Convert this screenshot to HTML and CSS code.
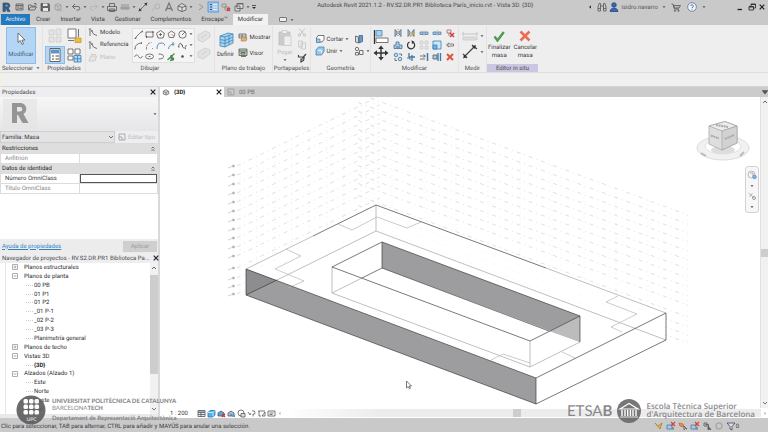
FILE: index.html
```html
<!DOCTYPE html>
<html lang="es">
<head>
<meta charset="utf-8">
<title>Autodesk Revit 2021.1.2</title>
<link rel="stylesheet" href="styles.css">
</head>
<body>
<svg class="sprite" aria-hidden="true">
  <defs>
    <symbol id="i-caret" viewBox="0 0 4 4"><path d="M0.5 1.2h3L2 3z" fill="#555"/></symbol>
    <symbol id="i-left" viewBox="0 0 4 4"><path d="M3 .3v3.400L1 2z" fill="#333"/></symbol>
    <symbol id="i-r" viewBox="0 0 12 12"><path d="M3 2h4.5a2.6 2.6 0 0 1 .8 5L10 10.500H7.500L6 7.500H5.300v3H3zM5.300 3.800v2H7a1 1 0 0 0 0-2z" fill="#1b5fae" fill-rule="evenodd"/></symbol>
    <symbol id="i-home" viewBox="0 0 12 12"><path d="M3 3h7v6H3zM3 4.500h7M5 4.500V9M6.500 6h2.500M6.500 7.500h2.500"/></symbol>
    <symbol id="i-open" viewBox="0 0 12 12"><path d="M2.500 9V4h2.500l1 1h3v1M2.500 9l2-3h6l-2 3zM8 2.500h2v2"/></symbol>
    <symbol id="i-save" viewBox="0 0 12 12"><path d="M2 2.500h7.500l1 1V10H2z" fill="#666"/><path d="M4 2.500h4.500V5H4zM4 7h5v3H4z" fill="#e8e8e8" stroke="none"/></symbol>
    <symbol id="i-sync" viewBox="0 0 12 12"><path d="M3 4l3-1.500L9 4v4L6 9.500 3 8zM3 4l3 1.500L9 4M6 5.500v4M7 8l3 2" stroke="#999"/></symbol>
    <symbol id="i-undo" viewBox="0 0 12 12"><path d="M5 3L2.500 5.500 5 8M2.500 5.500H8a1.800 1.800 0 0 1 0 3.600H6.500"/></symbol>
    <symbol id="i-redo" viewBox="0 0 12 12"><path d="M7 3l2.500 2.500L7 8M9.500 5.500H4a1.800 1.800 0 0 0 0 3.600h1.500" stroke="#b2b2b2"/></symbol>
    <symbol id="i-print" viewBox="0 0 12 12"><path d="M1.500 5.500h9v4h-9zM3.500 5.500v-3h5v3M3.500 8h5v2.500h-5z"/></symbol>
    <symbol id="i-ruler" viewBox="0 0 12 12"><path d="M2 4h8M2 6h8v2H2zM4 6v2M6 6v2M8 6v2" stroke="#888"/></symbol>
    <symbol id="i-dim" viewBox="0 0 12 12"><path d="M2.500 9.500l7-7"/><path d="M1.500 10.500l1-3.500 2.500 2.500zM10.500 1.500l-1 3.500L7 2.500z" fill="#444" stroke="none"/></symbol>
    <symbol id="i-tag" viewBox="0 0 12 12"><path d="M2 10l3-3.500M5 6.500a2.500 2.500 0 1 1 2.500 1.500z" stroke="#aaa"/></symbol>
    <symbol id="i-a" viewBox="0 0 12 12"><path d="M2.500 10L6 2l3.500 8M4 7.500h4" stroke="#777" stroke-width="1.300"/></symbol>
    <symbol id="i-cube" viewBox="0 0 12 12"><path d="M2 5l4-2.500L10 5v4L6 10.500 2 9zM2 5l4 1.500L10 5M6 6.500v4" fill="#ddd"/></symbol>
    <symbol id="i-section" viewBox="0 0 12 12"><path d="M5 3l4 3-4 3" stroke="#888"/></symbol>
    <symbol id="i-lines" viewBox="0 0 12 12"><path d="M1 1h11v10H1z" fill="#9fc6ec" stroke="#4b8fd0"/><path d="M3 3.500h2M3 6h2M3 8.500h2" stroke="#234"/><path d="M6 3.500h4M6 6h4M6 8.500h4" stroke="#fff"/></symbol>
    <symbol id="i-closewin" viewBox="0 0 12 12"><path d="M2 3h4v3H2zM5 6h4v3H5z" stroke="#888"/><path d="M7 7l3 3M10 7l-3 3" stroke="#d33" stroke-width="1.300"/></symbol>
    <symbol id="i-switch" viewBox="0 0 12 12"><path d="M4 2.500h6v5H4zM2 5h5v5H2z" fill="#ddd"/><path d="M4 3h6"/></symbol>
    <symbol id="i-qat" viewBox="0 0 12 12"><path d="M1 4.500h4" stroke="#333"/><path d="M1 6h4L3 8z" fill="#333" stroke="none"/></symbol>
    <symbol id="i-x" viewBox="0 0 8 8"><path d="M1.700 1.700l4.600 4.600M6.300 1.700L1.700 6.300" stroke="#222" stroke-width="1.200"/></symbol>
    <symbol id="i-bino" viewBox="0 0 12 12"><path d="M2 10V6l1-3.500h1.500V10zM7.500 10V2.500H9L10 6v4zM4.500 5h3M2 7.500h2.500M7.500 7.500H10" stroke="#555"/></symbol>
    <symbol id="i-user" viewBox="0 0 12 12"><circle cx="6" cy="4" r="2.300" fill="#3c66ae" stroke="#274a86"/><path d="M2 10.500q0-3 4-3.500 4 .5 4 3.500z" fill="#3c66ae" stroke="#274a86"/></symbol>
    <symbol id="i-cart" viewBox="0 0 12 12"><path d="M1.500 3H3l1.500 5h4.500M3.500 4.500h7L9 7H4.300z" fill="#bbb"/><circle cx="5" cy="9.700" r=".7"/><circle cx="8.500" cy="9.700" r=".7"/></symbol>
    <symbol id="i-help" viewBox="0 0 12 12"><circle cx="6" cy="6" r="4.300" fill="#f6f8fb" stroke="#5b6f92"/><path d="M4.600 5a1.400 1.400 0 1 1 1.400 1.600v.7M6 8.200v.8" stroke="#2f55a0"/></symbol>
    <symbol id="i-min" viewBox="0 0 12 12"><path d="M3.500 8.500h4.500" stroke="#222" stroke-width="1.300"/></symbol>
    <symbol id="i-restore" viewBox="0 0 12 12"><path d="M3 5.500h4.500v3.500H3zM5 5.500V3h4.500v4H7.500M5 3.500h4.500M3 6h4.500" stroke="#222"/></symbol>

    <symbol id="i-cursor" viewBox="0 0 12 16"><path d="M3 2v9.500l2.300-2L7 13.500l1.600-.8-1.700-3.700H10z" fill="#fff" stroke="#555"/></symbol>
    <symbol id="i-typeprops" viewBox="0 0 16 16"><path d="M2 2h5v5H2zM9 1h5v6H9zM2 9h5v5H2zM9 9h5v5H9z" fill="#e4e4e4" stroke="#ccc"/></symbol>
    <symbol id="i-family" viewBox="0 0 16 16"><path d="M2 1h8v9H2zM2 12.500h6M12.500 1v8" fill="#fff" stroke="#555"/><path d="M9 10h6v4.500H9z" fill="#f0be3c" stroke="#c9962a"/></symbol>
    <symbol id="i-props" viewBox="0 0 16 16"><path d="M3 1.500h10v13H3z" fill="#fff" stroke="#444"/><path d="M4 2.500h8v4H4z" fill="#5b93d2" stroke="none"/><path d="M5 9h2M5 12h2M8.500 9H12M8.500 12H12" stroke="#222"/></symbol>
    <symbol id="i-cats" viewBox="0 0 16 16"><path d="M2 2h5v5H2zM9 2h5v5H9zM2 9h5v4H2z" fill="#fff" stroke="#555"/><path d="M8 8.500h7V15H8zM11.500 8.500V15M8 11.800h7" fill="#b5d8f0" stroke="#2f7fbf"/></symbol>
    <symbol id="i-model" viewBox="0 0 10 10"><path d="M2 9V2M.8 2h2.400M4 4.500Q5 8 9 8.500" /><circle cx="4" cy="4" r=".6"/></symbol>
    <symbol id="i-plane" viewBox="0 0 10 10"><path d="M1 8l1.500-5h6L7 8zM3 1.500h5" fill="#e6e6e6" stroke="#c4c4c4"/></symbol>
    <symbol id="i-line" viewBox="0 0 11 11"><path d="M2.500 8.500l6-6M1.500 9.500h1.500v-1.500M8 3h1.500V1.500"/></symbol>
    <symbol id="i-rect" viewBox="0 0 11 11"><path d="M2 3h7v5H2z"/><path d="M2 8h1M8.500 3h1" stroke-width="1.800"/></symbol>
    <symbol id="i-poly" viewBox="0 0 11 11"><path d="M5.500 1.500l4 2.800-1.500 4.700H3L1.500 4.300zM5.500 4v3M4 5.500h3"/></symbol>
    <symbol id="i-polyc" viewBox="0 0 11 11"><path d="M5.500 2l3.500 2.500-1.300 4H3.300L2 4.500z"/><path d="M5.500 5.500L8 7" stroke="#c66"/></symbol>
    <symbol id="i-circle" viewBox="0 0 11 11"><circle cx="5.500" cy="5.500" r="3.700"/><path d="M5.500 5.500L8 3M5 5.500h1"/></symbol>
    <symbol id="i-arc1" viewBox="0 0 11 11"><path d="M2 9Q2 3.500 8.500 3M1.500 9h1M8.500 2v2"/></symbol>
    <symbol id="i-arc2" viewBox="0 0 11 11"><path d="M2.500 9.500Q2 3 7.500 2.500M8 8.500h.8" stroke-dasharray="2 1"/></symbol>
    <symbol id="i-arc3" viewBox="0 0 11 11"><path d="M2 9Q2 3 6 3t3.500 2.500" stroke="#3d6ea5"/></symbol>
    <symbol id="i-arc4" viewBox="0 0 11 11"><path d="M2.500 9Q3 4 8.500 4M7 2v4" stroke="#3d7fa5"/></symbol>
    <symbol id="i-spline" viewBox="0 0 11 11"><path d="M1.500 7Q3 0 5 5.500T9.500 5"/><path d="M1.500 7h.8M5 5.500h.8M8 8.500h.8" stroke-width="1.600"/></symbol>
    <symbol id="i-spline2" viewBox="0 0 11 11"><path d="M1.500 6Q3.500 2 5.500 5.500T9.500 5"/></symbol>
    <symbol id="i-ell" viewBox="0 0 11 11"><ellipse cx="5.500" cy="5.500" rx="4" ry="2.500"/><path d="M4.500 5.500h2"/></symbol>
    <symbol id="i-pell" viewBox="0 0 11 11"><path d="M3.500 3q5 0 5 2.500T3.500 8"/></symbol>
    <symbol id="i-pick" viewBox="0 0 11 11"><path d="M1.500 9l7-6.500M4 9.500l4-1" stroke="#3da03d" stroke-width="1.300"/><path d="M5 4v4l3 0z" fill="#6a8"/></symbol>
    <symbol id="i-point" viewBox="0 0 11 11"><circle cx="5.500" cy="5.500" r="1" fill="#555"/></symbol>
    <symbol id="i-face" viewBox="0 0 16 14"><path d="M2 5l7-4 5 2v4l-7 5-5-2zM5 8l6-4" fill="#e2e2e2" stroke="#ccc"/></symbol>
    <symbol id="i-grid" viewBox="0 0 18 18"><path d="M3 5l8-3 5 1v9l-8 4-5-1z" fill="#a8d2ee" stroke="#3f87bd"/><path d="M3 8.500l5 1 8-3.500M3 11.500l5 1 8-3.500M8 6v10M12 3.800v10M3 5l5 1 8-3" stroke="#3f87bd"/></symbol>
    <symbol id="i-show" viewBox="0 0 10 10"><path d="M1 2h7v4H1zM1 4h7M4 2v4" fill="#fff"/><path d="M4 5l5 1-1 3H3z" fill="#e8b64a" stroke="#a88"/></symbol>
    <symbol id="i-viewer" viewBox="0 0 10 10"><path d="M1 1h8v6.500H1zM1 3h8M3 8.500h5M3 4.500h4v1.500H3z" fill="#b8d8c0"/></symbol>
    <symbol id="i-paste" viewBox="0 0 16 18"><path d="M2 3h11v13H2z" fill="#ccc" stroke="#bbb"/><path d="M5 1.500h5v3H5zM7 7h7v9.500H7z" fill="#eee" stroke="#c8c8c8"/></symbol>
    <symbol id="i-cut" viewBox="0 0 10 10"><path d="M2 1.500l5 6M8 1.500l-5 6" stroke="#bbb"/><circle cx="2.500" cy="8" r="1.200" stroke="#bbb"/><circle cx="7.500" cy="8" r="1.200" stroke="#bbb"/></symbol>
    <symbol id="i-copy" viewBox="0 0 10 10"><path d="M1.500 1h4v6h-4zM4 3h4.500v6H4z" fill="#eee" stroke="#c4c4c4"/></symbol>
    <symbol id="i-brush" viewBox="0 0 10 10"><path d="M9 1L5.500 5M1.500 2v2H7v2H4v3l3-2" stroke="#444" stroke-width="1.200"/></symbol>
    <symbol id="i-cope" viewBox="0 0 10 10"><path d="M3 1.500h6v4L7 8H1.500V4z" fill="#fff"/><path d="M1.500 5h3.500v3.500H1.500z" fill="#9cc8ea" stroke="#4d84b5"/></symbol>
    <symbol id="i-join" viewBox="0 0 10 10"><path d="M3.500 1h5.500v4.500L6.500 9H1V4z" fill="#9cc8ea" stroke="#4a7dad"/><path d="M3 4.500h3.500V7" stroke="#fff"/></symbol>
    <symbol id="i-wall" viewBox="0 0 10 10"><path d="M1.500 2l3 1v6l-3-1z" fill="#ddd"/><path d="M5 1.500h3.500v6L5 9z" fill="#5f9bd0" stroke="#45658c"/></symbol>
    <symbol id="i-demol" viewBox="0 0 10 10"><circle cx="3" cy="3" r="1.700"/><path d="M5.500 4.500H9v4H5.500zM1.500 6.500h3V9h-3z" fill="#eee"/></symbol>
    <symbol id="i-align" viewBox="0 0 16 16"><path d="M1.500 1v14" stroke="#333" stroke-width="1.300"/><path d="M3 1.500h6V7H3z" fill="#a5d2f2" stroke="#4487ba"/><path d="M3 9h12v4.500H3z" fill="#fff" stroke="#555"/></symbol>
    <symbol id="i-move" viewBox="0 0 16 16"><path d="M8 3v10M3 8h10" stroke="#333" stroke-width="1.400"/><path d="M8 .5L10.800 4H5.200zM8 15.500L10.800 12H5.200zM.5 8L4 5.200v5.600zM15.500 8L12 5.200v5.600z" fill="#333" stroke="none"/></symbol>
    <symbol id="i-mirror" viewBox="0 0 10 10"><path d="M2 1.500v7L4 6V4zM8 1.500v7L6 6V4z" fill="#a5cbe8" stroke="#567"/><path d="M5 1v8" stroke="#a66" stroke-dasharray="1 1"/></symbol>
    <symbol id="i-mirror2" viewBox="0 0 10 10"><path d="M2 1.500v7L4 6V4zM8 1.500v7L6 6V4z" fill="#a5cbe8" stroke="#567"/><path d="M4 8.500l4.500-4" stroke="#d9a13b" stroke-width="1.500"/></symbol>
    <symbol id="i-split" viewBox="0 0 10 10"><path d="M1 4h3v2.500H1zM6 4h3v2.500H6z" fill="#a5cbe8" stroke="#4a82b2"/><path d="M5 2.500v5" stroke="#888"/></symbol>
    <symbol id="i-unpin" viewBox="0 0 10 10"><path d="M2 2h4v3H2zM4 5v3" stroke="#a66"/><path d="M5 5l4 4M9 5L5 9" stroke="#c33" stroke-width="1.300"/></symbol>
    <symbol id="i-offset" viewBox="0 0 10 10"><path d="M1 8.500V5h2V2h3v3h3v3.500z" fill="#a5cbe8" stroke="#3f74a5"/><path d="M3 7h4"/></symbol>
    <symbol id="i-rotate" viewBox="0 0 10 10"><path d="M3.500 2a3.600 3.600 0 1 0 3.500.2" stroke="#333" stroke-width="1.200"/><path d="M5.500 .2L8.500 2 6 4z" fill="#333" stroke="none"/></symbol>
    <symbol id="i-array" viewBox="0 0 10 10"><path d="M1 1h3v3H1zM6 1h3v3H6zM1 6h3v3H1zM6 6h3v3H6z" fill="#e5e5e5" stroke="#ccc"/></symbol>
    <symbol id="i-scale" viewBox="0 0 10 10"><path d="M1 1h8v8H1z" fill="#cde6f8" stroke="#3a7fba"/><path d="M1 5h4v4H1z" fill="#76b2df" stroke="#3a7fba"/></symbol>
    <symbol id="i-pin" viewBox="0 0 10 10"><path d="M1 5h2M3 3v4l2-1h3.500V4H5z" fill="#eee" stroke="#666"/></symbol>
    <symbol id="i-copy2" viewBox="0 0 10 10"><circle cx="3" cy="3" r="1.800" fill="#b9dbf2" stroke="#3d78ad"/><circle cx="7" cy="7" r="1.800" fill="#b9dbf2" stroke="#3d78ad"/><path d="M6 2h2.500v2M2 6v2.500h2"/></symbol>
    <symbol id="i-trim" viewBox="0 0 10 10"><path d="M3 1v4h6M6 9V3" stroke="#3d78ad" stroke-width="1.300"/><path d="M1 6h3v2"/></symbol>
    <symbol id="i-ext" viewBox="0 0 10 10"><path d="M8.500 1v8" stroke="#3d78ad" stroke-width="1.500"/><path d="M1 4h5M1 7h5M4.500 2.500L6.500 4 4.500 5.500"/></symbol>
    <symbol id="i-ext2" viewBox="0 0 10 10"><path d="M8.500 1v8M6 1v8" stroke="#3d78ad" stroke-width="1.300"/><path d="M1 3h4v4H1z" fill="#a5cbe8"/></symbol>
    <symbol id="i-del" viewBox="0 0 10 10"><path d="M2 2l6 6M8 2L2 8" stroke="#e0533f" stroke-width="2"/></symbol>
    <symbol id="i-meas1" viewBox="0 0 16 10"><path d="M1 3h14M1 1v4M15 1v4M1 7h14" stroke="#bbb"/><path d="M1 6h14v3H1z" fill="#ddd" stroke="#ccc"/></symbol>
    <symbol id="i-meas2" viewBox="0 0 16 16"><path d="M2 13L13 2M1 10l4 4M10 1l5 4" stroke="#444" stroke-width="1.200"/><path d="M1 14.500l1.500-4 2.500 2.500zM14 1l-1 4-3-2.500z" fill="#333" stroke="none"/></symbol>
    <symbol id="i-ok" viewBox="0 0 12 12"><path d="M1.500 6.500L4.500 10.500 10.800 2" stroke="#4d9a52" stroke-width="2.400"/></symbol>
    <symbol id="i-no" viewBox="0 0 12 12"><path d="M1.500 1.500l9 9M10.500 1.500l-9 9" stroke="#ec6e52" stroke-width="2.600"/></symbol>
    <symbol id="i-chev" viewBox="0 0 6 6"><path d="M1 2l2 2 2-2" stroke="#555"/></symbol>
    <symbol id="i-chevup" viewBox="0 0 6 6"><path d="M1 4l2-2 2 2" stroke="#444"/></symbol>
    <symbol id="i-plan" viewBox="0 0 8 8"><path d="M1 1h6v6H1zM1 4h3v3" stroke="#999"/></symbol>
    <symbol id="i-fold" viewBox="0 0 6 6"><path d="M1.500 2.500L3 1l1.500 1.500M1.500 5L3 3.500 4.500 5"/></symbol>
    <symbol id="i-plus" viewBox="0 0 6 6"><path d="M.5 .5h5v5h-5zM1.500 3h3M3 1.500v3" stroke="#999"/></symbol>
    <symbol id="i-minus" viewBox="0 0 6 6"><path d="M.5 .5h5v5h-5zM1.500 3h3" stroke="#999"/></symbol>

    <symbol id="v-detail" viewBox="0 0 9 9"><path d="M1 1.500h7v6H1zM1 3.500h7M1 5.500h7M4 3.500v4" fill="#eee"/><path d="M1 2.200h7" stroke="#579"/></symbol>
    <symbol id="v-style" viewBox="0 0 9 9"><path d="M1 3.500l2-2h5v4.500l-2 2H1z" fill="#5ab0e6" stroke="#2876b2"/><path d="M1 3.500h5v4M6 3.500l2-2" stroke="#d8f0ff"/></symbol>
    <symbol id="v-sun" viewBox="0 0 9 9"><path d="M1 7V4l3-2 3 2v3z" fill="#6aa5d5" stroke="#357"/><path d="M5 5l3 3M8 5L5 8" stroke="#d33" stroke-width="1.200"/></symbol>
    <symbol id="v-shadow" viewBox="0 0 9 9"><path d="M1 7V4l3-2 3 2v3zM4 4.500V7" fill="#a9c6de" stroke="#456"/><path d="M5.500 5.500l2.500 2.500M8 5.500L5.500 8" stroke="#58b" stroke-width="1"/></symbol>
    <symbol id="v-lock" viewBox="0 0 9 9"><circle cx="4" cy="4" r="3"/><path d="M4 4.500h4V8H4z" fill="#ddd"/></symbol>
    <symbol id="v-glass" viewBox="0 0 9 9"><path d="M1 3l2 3 1-2M5 2q3-1 3 1.500T6 5v2.500"/></symbol>
    <symbol id="v-prop" viewBox="0 0 9 9"><path d="M1 2h7M2 2v5h2M5 7l3-4v4z"/></symbol>
    <symbol id="v-view" viewBox="0 0 9 9"><path d="M1 2h7v5H1zM2.500 5.500h3M2.500 4h4"/></symbol>
    <symbol id="s-1" viewBox="0 0 10 10"><path d="M1 2l3 3 4-3-2 6z" fill="#ecb542" stroke="#a88030"/></symbol>
    <symbol id="s-2" viewBox="0 0 10 10"><path d="M1 4h5v4H1z" fill="#a4cbe8" stroke="#357fb8"/><path d="M5 1l4 4M9 1L5 5" stroke="#d34434" stroke-width="1.200"/><path d="M7 6v3"/></symbol>
    <symbol id="s-3" viewBox="0 0 10 10"><path d="M1 2l4 1 1 3-4-1z" fill="#ef8c58" stroke="#d2602e"/><path d="M6 5v4l1.500-1.500L9 8z"/></symbol>
    <symbol id="s-4" viewBox="0 0 10 10"><path d="M2 2h3v3H2zM3.500 3.500h3v2"/><path d="M6 5v4l1-1 2 .5z" fill="#666"/></symbol>
    <symbol id="s-5" viewBox="0 0 10 10"><circle cx="5" cy="5" r="3" stroke="#aaa" stroke-width="1.500"/></symbol>
    <symbol id="s-6" viewBox="0 0 10 10"><path d="M1 2h8L6 5.500V9L4 8V5.500z" fill="#dde" stroke="#445"/></symbol>
  </defs>
</svg>

<header class="titlebar">
  <div class="quick">
    <svg class="q"><use href="#i-r"/></svg>
    <button aria-label="Inicio"><svg class="q"><use href="#i-home"/></svg></button>
    <button aria-label="Abrir"><svg class="q"><use href="#i-open"/></svg></button>
    <button aria-label="Guardar"><svg class="q"><use href="#i-save"/></svg></button>
    <button aria-label="Sincronizar"><svg class="q"><use href="#i-sync"/></svg></button>
    <svg class="c"><use href="#i-caret"/></svg>
    <button aria-label="Deshacer"><svg class="q"><use href="#i-undo"/></svg></button>
    <svg class="c"><use href="#i-caret"/></svg>
    <button aria-label="Rehacer"><svg class="q"><use href="#i-redo"/></svg></button>
    <svg class="c"><use href="#i-caret"/></svg>
    <button aria-label="Imprimir"><svg class="q"><use href="#i-print"/></svg></button>
    <button aria-label="Medir"><svg class="q"><use href="#i-ruler"/></svg></button>
    <svg class="c"><use href="#i-caret"/></svg>
    <button aria-label="Cota alineada"><svg class="q"><use href="#i-dim"/></svg></button>
    <button aria-label="Etiqueta"><svg class="q"><use href="#i-tag"/></svg></button>
    <button aria-label="Texto"><svg class="q"><use href="#i-a"/></svg></button>
    <button aria-label="Vista 3D"><svg class="q"><use href="#i-cube"/></svg></button>
    <svg class="c"><use href="#i-caret"/></svg>
    <button aria-label="Sección"><svg class="q"><use href="#i-section"/></svg></button>
    <button aria-label="Líneas finas"><svg class="q"><use href="#i-lines"/></svg></button>
    <button aria-label="Cerrar ocultas"><svg class="q"><use href="#i-closewin"/></svg></button>
    <button aria-label="Cambiar ventanas"><svg class="q"><use href="#i-switch"/></svg></button>
    <svg class="c"><use href="#i-caret"/></svg>
    <button aria-label="Personalizar"><svg class="q"><use href="#i-qat"/></svg></button>
  </div>
  <h1>Autodesk Revit 2021.1.2 - RV.S2.DR.PR1 Biblioteca París_inicio.rvt - Vista 3D: {3D}</h1>
  <div class="account">
    <svg class="c"><use href="#i-left"/></svg>
    <button aria-label="Buscar"><svg class="q"><use href="#i-bino"/></svg></button>
    <button class="user"><svg class="q"><use href="#i-user"/></svg>isidro.navarro</button>
    <svg class="c"><use href="#i-caret"/></svg>
    <button aria-label="Tienda"><svg class="q"><use href="#i-cart"/></svg></button>
    <button aria-label="Ayuda"><svg class="q"><use href="#i-help"/></svg></button>
    <svg class="c"><use href="#i-caret"/></svg>
  </div>
  <div class="window">
    <button aria-label="Minimizar"><svg class="q"><use href="#i-min"/></svg></button>
    <button aria-label="Restaurar"><svg class="q"><use href="#i-restore"/></svg></button>
    <button aria-label="Cerrar"><svg class="w8"><use href="#i-x"/></svg></button>
  </div>
</header>

<nav class="tabs">
  <button class="file">Archivo</button>
  <button>Crear</button>
  <button>Insertar</button>
  <button>Vista</button>
  <button>Gestionar</button>
  <button>Complementos</button>
  <button>Enscape™</button>
  <button class="active">Modificar</button>
  <button class="collapse" aria-label="Minimizar cinta"><i></i><svg class="c"><use href="#i-caret"/></svg></button>
</nav>

<div class="ribbon">
  <section class="panel p-sel">
    <div class="tools"><button class="modify on"><svg class="cur"><use href="#i-cursor"/></svg>Modificar</button></div>
    <h2>Seleccionar <svg class="c"><use href="#i-caret"/></svg></h2>
  </section>
  <section class="panel p-prop">
    <div class="tools quad">
      <button aria-label="Propiedades de tipo"><svg class="m"><use href="#i-typeprops"/></svg></button>
      <button aria-label="Familia"><svg class="m"><use href="#i-family"/></svg></button>
      <button class="on" aria-label="Propiedades"><svg class="m"><use href="#i-props"/></svg></button>
      <button aria-label="Categorías"><svg class="m"><use href="#i-cats"/></svg></button>
    </div>
    <h2>Propiedades</h2>
  </section>
  <section class="panel p-draw">
    <div class="tools">
      <div class="stack">
        <button><svg class="s"><use href="#i-model"/></svg>Modelo</button>
        <button><svg class="s"><use href="#i-model"/></svg>Referencia</button>
        <button disabled><svg class="s"><use href="#i-plane"/></svg>Plano</button>
      </div>
      <div class="gallery">
        <button aria-label="Línea"><svg class="g"><use href="#i-line"/></svg></button>
        <button aria-label="Rectángulo"><svg class="g"><use href="#i-rect"/></svg></button>
        <button aria-label="Polígono inscrito"><svg class="g"><use href="#i-poly"/></svg></button>
        <button aria-label="Polígono circunscrito"><svg class="g"><use href="#i-polyc"/></svg></button>
        <button aria-label="Círculo"><svg class="g"><use href="#i-circle"/></svg></button>
        <button aria-label="Subir"><svg class="c"><use href="#i-caret"/></svg></button>
        <button aria-label="Arco por tres puntos"><svg class="g"><use href="#i-arc1"/></svg></button>
        <button aria-label="Arco por centro"><svg class="g"><use href="#i-arc2"/></svg></button>
        <button aria-label="Arco tangente"><svg class="g"><use href="#i-arc3"/></svg></button>
        <button aria-label="Arco de empalme"><svg class="g"><use href="#i-arc4"/></svg></button>
        <button aria-label="Spline"><svg class="g"><use href="#i-spline"/></svg></button>
        <button aria-label="Bajar"><svg class="c"><use href="#i-caret"/></svg></button>
        <button aria-label="Spline por puntos"><svg class="g"><use href="#i-spline2"/></svg></button>
        <button aria-label="Elipse"><svg class="g"><use href="#i-ell"/></svg></button>
        <button aria-label="Elipse parcial"><svg class="g"><use href="#i-pell"/></svg></button>
        <button aria-label="Seleccionar líneas"><svg class="g"><use href="#i-pick"/></svg></button>
        <button aria-label="Punto"><svg class="g"><use href="#i-point"/></svg></button>
        <button aria-label="Más"><svg class="c"><use href="#i-caret"/></svg></button>
      </div>
      <div class="stack faces">
        <button disabled aria-label="Dibujar en cara"><svg class="f"><use href="#i-face"/></svg></button>
        <button disabled aria-label="Dibujar en plano"><svg class="f"><use href="#i-face"/></svg></button>
      </div>
    </div>
    <h2>Dibujar</h2>
  </section>
  <section class="panel p-plane">
    <div class="tools">
      <button class="big"><svg class="b"><use href="#i-grid"/></svg>Definir</button>
      <div class="stack two">
        <button><svg class="s"><use href="#i-show"/></svg>Mostrar</button>
        <button><svg class="s"><use href="#i-viewer"/></svg>Visor</button>
      </div>
    </div>
    <h2>Plano de trabajo</h2>
  </section>
  <section class="panel p-clip">
    <div class="tools">
      <button class="big" disabled><svg class="b"><use href="#i-paste"/></svg>Pegar<svg class="c"><use href="#i-caret"/></svg></button>
      <div class="stack">
        <button disabled aria-label="Cortar"><svg class="s"><use href="#i-cut"/></svg></button>
        <button disabled aria-label="Copiar"><svg class="s"><use href="#i-copy"/></svg></button>
        <button aria-label="Igualar tipo"><svg class="s"><use href="#i-brush"/></svg></button>
      </div>
    </div>
    <h2>Portapapeles</h2>
  </section>
  <section class="panel p-geo">
    <div class="tools geo">
      <button><svg class="s"><use href="#i-cope"/></svg>Cortar <svg class="c"><use href="#i-caret"/></svg></button>
      <button aria-label="Muro"><svg class="s"><use href="#i-wall"/></svg></button>
      <button><svg class="s"><use href="#i-join"/></svg>Unir <svg class="c"><use href="#i-caret"/></svg></button>
      <button aria-label="Derribar"><svg class="s"><use href="#i-demol"/></svg><svg class="c"><use href="#i-caret"/></svg></button>
    </div>
    <h2>Geometría</h2>
  </section>
  <section class="panel p-mod">
    <div class="tools">
      <div class="stack two">
        <button aria-label="Alinear"><svg class="m"><use href="#i-align"/></svg></button>
        <button aria-label="Mover"><svg class="m"><use href="#i-move"/></svg></button>
      </div>
      <div class="edit">
        <button aria-label="Simetría por eje"><svg class="s"><use href="#i-mirror"/></svg></button>
        <button aria-label="Simetría dibujada"><svg class="s"><use href="#i-mirror2"/></svg></button>
        <button aria-label="Dividir"><svg class="s"><use href="#i-split"/></svg></button>
        <button aria-label="Dividir con hueco"><svg class="s"><use href="#i-split"/></svg></button>
        <button aria-label="Desbloquear"><svg class="s"><use href="#i-unpin"/></svg></button>
        <button aria-label="Desfase"><svg class="s"><use href="#i-offset"/></svg></button>
        <button aria-label="Rotar"><svg class="s"><use href="#i-rotate"/></svg></button>
        <button aria-label="Matriz"><svg class="s"><use href="#i-array"/></svg></button>
        <button aria-label="Escala"><svg class="s"><use href="#i-scale"/></svg></button>
        <button aria-label="Bloquear"><svg class="s"><use href="#i-pin"/></svg></button>
        <button aria-label="Copiar elemento"><svg class="s"><use href="#i-copy2"/></svg></button>
        <button aria-label="Recortar"><svg class="s"><use href="#i-trim"/></svg></button>
        <button aria-label="Extender uno"><svg class="s"><use href="#i-ext"/></svg></button>
        <button aria-label="Extender varios"><svg class="s"><use href="#i-ext2"/></svg></button>
        <button aria-label="Suprimir"><svg class="s"><use href="#i-del"/></svg></button>
      </div>
    </div>
    <h2>Modificar</h2>
  </section>
  <section class="panel p-meas">
    <div class="tools stack two">
      <button aria-label="Medir entre referencias"><svg class="l"><use href="#i-meas1"/></svg><svg class="c"><use href="#i-caret"/></svg></button>
      <button aria-label="Acotar"><svg class="m"><use href="#i-meas2"/></svg><svg class="c"><use href="#i-caret"/></svg></button>
    </div>
    <h2>Medir</h2>
  </section>
  <section class="panel p-inplace">
    <div class="tools">
      <button class="big"><svg class="k"><use href="#i-ok"/></svg><span>Finalizar<br>masa</span></button>
      <button class="big"><svg class="k"><use href="#i-no"/></svg><span>Cancelar<br>masa</span></button>
    </div>
    <h2>Editor in situ</h2>
  </section>
</div>
<div class="options"></div>

<main>
  <aside>
    <section class="props">
      <header class="dock"><h2>Propiedades</h2><button aria-label="Cerrar propiedades"><svg class="w8"><use href="#i-x"/></svg></button></header>
      <div class="type">
        <svg class="bigr" viewBox="0 0 34 30"><path d="M0 0h34v30H0z" fill="#e4e4e4" opacity=".7"/><path d="M9 4h9a6 6 0 0 1 2.500 11l5 9h-6l-4.500-8h-1v8H9zM14 8v4.500h3a2.200 2.200 0 0 0 0-4.500z" fill="#959597" fill-rule="evenodd"/></svg>
        <svg class="c"><use href="#i-caret"/></svg>
      </div>
      <div class="family">
        <label class="combo"><select aria-label="Familia"><option>Familia: Masa</option></select><svg class="w6"><use href="#i-chev"/></svg></label>
        <button disabled><svg class="w8"><use href="#i-plan"/></svg>Editar tipo</button>
      </div>
      <table>
        <tbody>
          <tr class="group"><th colspan="2">Restricciones<svg class="w6"><use href="#i-fold"/></svg></th></tr>
          <tr class="dim"><td>Anfitrión</td><td></td></tr>
          <tr class="group"><th colspan="2">Datos de identidad<svg class="w6"><use href="#i-fold"/></svg></th></tr>
          <tr><td><label for="omni">Número OmniClass</label></td><td><input id="omni" type="text"></td></tr>
          <tr class="dim"><td>Título OmniClass</td><td></td></tr>
        </tbody>
      </table>
      <footer><a href="#">Ayuda de propiedades</a><button disabled>Aplicar</button></footer>
    </section>
    <section class="browser">
      <header class="dock"><h2>Navegador de proyectos - RV.S2.DR.PR1 Biblioteca Pa...</h2><button aria-label="Cerrar navegador"><svg class="w8"><use href="#i-x"/></svg></button></header>
      <div class="treebox">
        <ul class="tree">
          <li><svg class="w6"><use href="#i-plus"/></svg>Planos estructurales</li>
          <li><svg class="w6"><use href="#i-minus"/></svg>Planos de planta</li>
          <li class="leaf">00 PB</li>
          <li class="leaf">01 P1</li>
          <li class="leaf">01 P2</li>
          <li class="leaf">_01 P-1</li>
          <li class="leaf">_02 P-2</li>
          <li class="leaf">_03 P-3</li>
          <li class="leaf">Planimetría general</li>
          <li><svg class="w6"><use href="#i-plus"/></svg>Planos de techo</li>
          <li><svg class="w6"><use href="#i-minus"/></svg>Vistas 3D</li>
          <li class="leaf current">{3D}</li>
          <li><svg class="w6"><use href="#i-minus"/></svg>Alzados (Alzado 1)</li>
          <li class="leaf">Este</li>
          <li class="leaf">Norte</li>
          <li class="leaf">Oeste</li>
          <li class="leaf">Sur</li>
        </ul>
        <div class="vbar"><svg class="w6"><use href="#i-chevup"/></svg><i></i><svg class="w6"><use href="#i-chev"/></svg></div>
      </div>
      <div class="hbar"></div>
    </section>
  </aside>

  <section class="view">
    <div class="doctabs">
      <button class="active"><svg class="w8b"><use href="#i-cube"/></svg><b>{3D}</b><svg class="w8 x"><use href="#i-x"/></svg></button>
      <button><svg class="w8"><use href="#i-plan"/></svg>00 PB</button>
      <svg class="w6 more"><use href="#i-caret"/></svg>
    </div>
    <div class="stage">
      <svg class="canvas" viewBox="160 97 600 311" role="img" aria-label="Masa en vista 3D">
        <defs>
          <g id="level">
            <path d="M237 166L380 96M358 93.500L688 215" stroke="#d2d2d2" stroke-width=".7" stroke-dasharray="4 4 1 4"/>
            <path d="M228 168l5-2" stroke="#ccc"/>
            <circle cx="233.500" cy="166" r="1.100" fill="#b8b8b8" stroke="#adadad" stroke-width=".6"/>
          </g>
        </defs>
        <g stroke="#ebebeb" stroke-dasharray="1 4">
          <path d="M240 164v130M257 156v110M275 147v108M292 139v108M309 131v108M327 122v108M344 114v108M361 106v105M374 98v108M392 105v108M424 117v108M456 129v108M488 141v108M520 153v108M552 165v108M584 177v108M616 188v108M648 200v110M687 215v128"/>
        </g>
        <use href="#level"/><use href="#level" y="9"/><use href="#level" y="18"/><use href="#level" y="27"/>
        <use href="#level" y="36"/><use href="#level" y="45"/><use href="#level" y="54"/><use href="#level" y="63"/>
        <use href="#level" y="72"/><use href="#level" y="81"/><use href="#level" y="90"/><use href="#level" y="102"/>
        <use href="#level" y="112"/><use href="#level" y="120"/><use href="#level" y="128"/>
        <path d="M246 269L376 205 666 313V340L536 404 246 295z" fill="#fff" opacity=".8" stroke="none"/>
        <path d="M246 269L536 378V404L246 295z" fill="#9d9d9f" stroke="none"/>
        <path d="M246 269L277 280.500 246 295z" fill="#8d8d90" stroke="none"/>
        <path d="M382 242L580 316V342L382 268z" fill="#9d9d9f" stroke="none"/>
        <path d="M580 316V342L549 331z" fill="#bcbcbd" stroke="none"/>
        <g stroke="#a4a4a4" stroke-width=".7">
          <path d="M376 205v26M277 280L376 231 666 340M332 293L530 367 580 342M332 267v26M530 341v26M332 293L362 278"/>
          <path d="M338 224L352 230 377 217 407 228 421 222M286 249L301 256 275 269 304 281 288 288M618 296L606 302 637 314 611 327 622 332M491 360L503 354 530 363M562 352L575 358" stroke="#b4b4b4"/>
          <path d="M246 269L313 236M546 268L666 313"/>
        </g>
        <g stroke="#3f3f3f" stroke-width=".7">
          <path d="M313 236L376 205 546 268M246 269L536 378 666 313V340L536 404 246 295V269M536 378V404M246 295L277 280"/>
          <path d="M382 242L332 267 530 341 580 316 382 242V268L549 331M382 268L362 278M580 316v26"/>
        </g>
        <path d="M406.500 381v7l1.700-1.500 1.200 2.300 1-.5-1.100-2.300H411.500z" fill="#fff" stroke="#444" stroke-width=".7"/>
      </svg>
      <svg class="viewcube" viewBox="0 0 54 42" role="img" aria-label="Cubo de vistas">
        <ellipse cx="27" cy="28" rx="26" ry="12" fill="#f1f1f1" stroke="#d4d4d4"/>
        <ellipse cx="27" cy="26.500" rx="18" ry="7.500" fill="#fff" stroke="#d9d9d9"/>
        <ellipse cx="27" cy="30" rx="12" ry="4" fill="#ddd" stroke="none"/>
        <path d="M5 33l5 3M44 36l4-4" stroke="#bbb" stroke-width="2"/>
        <path d="M13 6L29 1.500 41 6V23L26 30 13 24z" fill="#dedede" stroke="#aaa"/>
        <path d="M13 6L29 1.500 41 6 26 11z" fill="#ececec" stroke="#aaa"/>
        <path d="M26 11L41 6V23L26 30z" fill="#d2d2d2" stroke="#aaa"/>
        <path d="M20 5l12 2M15 15.500l8 3M29 19l9-4" stroke="#aaa" stroke-width="2" stroke-dasharray="2 .6"/>
      </svg>
      <div class="navbar">
        <button aria-label="Rueda de navegación"><svg class="n" viewBox="0 0 10 10"><circle cx="4.500" cy="4.500" r="3.500" stroke="#aaa"/><path d="M3 3h3v3" stroke="#999"/><circle cx="7.500" cy="7" r="1.800" fill="#86b3df" stroke="#5c8fc4"/></svg></button>
        <svg class="c"><use href="#i-caret"/></svg>
        <button aria-label="Zoom"><svg class="n" viewBox="0 0 10 10"><path d="M1.500 2l6 5M5.500 2l-3 4" stroke="#aaa"/><circle cx="7" cy="7" r="1.500" stroke="#888"/></svg></button>
        <svg class="c"><use href="#i-caret"/></svg>
      </div>
      <div class="vbar stagebar"><svg class="w6"><use href="#i-chevup"/></svg><i></i><svg class="w6"><use href="#i-chev"/></svg></div>
    </div>
    <div class="viewbar">
      <button class="scale">1 : 200</button>
      <button aria-label="Nivel de detalle"><svg class="v"><use href="#v-detail"/></svg></button>
      <button aria-label="Estilo visual"><svg class="v"><use href="#v-style"/></svg></button>
      <button aria-label="Camino de sol"><svg class="v"><use href="#v-sun"/></svg></button>
      <button aria-label="Sombras"><svg class="v"><use href="#v-shadow"/></svg></button>
      <button aria-label="Bloquear vista"><svg class="v"><use href="#v-lock"/></svg></button>
      <button aria-label="Ocultar temporalmente"><svg class="v"><use href="#v-glass"/></svg></button>
      <button aria-label="Mostrar ocultos"><svg class="v"><use href="#v-prop"/></svg></button>
      <button aria-label="Propiedades de vista"><svg class="v"><use href="#v-view"/></svg></button>
      <span>‹</span>
      <div class="hscroll"><i></i></div>
      <span>›</span>
    </div>
  </section>
</main>

<footer class="status">
  <p>Clic para seleccionar, TAB para alternar, CTRL para añadir y MAYÚS para anular una selección.</p>
  <div class="filters">
    <button aria-label="Vínculos"><svg class="s"><use href="#s-1"/></svg></button>
    <button aria-label="Subyacentes"><svg class="s"><use href="#s-2"/></svg></button>
    <button aria-label="Bloqueados"><svg class="s"><use href="#s-3"/></svg></button>
    <button aria-label="Por cara"><svg class="s"><use href="#s-2"/></svg></button>
    <button aria-label="Arrastrar"><svg class="s"><use href="#s-4"/></svg></button>
    <button aria-label="Procesos"><svg class="s"><use href="#s-5"/></svg></button>
    <button class="count"><svg class="s"><use href="#s-6"/></svg>0</button>
  </div>
</footer>

<div class="brand upc">
  <svg class="seal" viewBox="0 0 30 30"><circle cx="15" cy="15" r="14.500" fill="#5c5c5e"/><g fill="#fff"><rect x="7.500" y="4" width="4.500" height="4.500" rx="1.500"/><rect x="13" y="4" width="4.500" height="4.500" rx="1.500"/><rect x="18.500" y="4" width="4.500" height="4.500" rx="1.500"/><rect x="7.500" y="9.500" width="4.500" height="4.500" rx="1.500"/><rect x="13" y="9.500" width="4.500" height="4.500" rx="1.500"/><rect x="18.500" y="9.500" width="4.500" height="4.500" rx="1.500"/><rect x="7.500" y="15" width="4.500" height="4.500" rx="1.500"/><rect x="13" y="15" width="4.500" height="4.500" rx="1.500"/><rect x="18.500" y="15" width="4.500" height="4.500" rx="1.500"/></g><text x="15.500" y="25.500" text-anchor="middle" fill="#ddd">UPC</text></svg>
  <div><p>UNIVERSITAT POLITÈCNICA DE CATALUNYA</p><p><span>BARCELONA</span>TECH</p><p class="dept">Departament de Representació Arquitectònica</p></div>
</div>
<div class="brand etsab">
  <strong>ETSA<b>B</b></strong>
  <svg class="temple" viewBox="0 0 24 24"><circle cx="12" cy="12" r="12" fill="#69696b"/><path d="M3 10L12 4.500 21 10z" fill="none" stroke="#fff" stroke-width="1.200"/><path d="M5 11v6M8 11v6M10.700 11v6M13.400 11v6M16 11v6M19 11v6" stroke="#fff" stroke-width="1.400"/><path d="M3 18h18" stroke="#fff"/></svg>
  <p>Escola Tècnica Superior<br>d'Arquitectura de Barcelona</p>
</div>
</body>
</html>
```
FILE: styles.css
```css
* { box-sizing: border-box; margin: 0; padding: 0; }
html, body { height: 100%; }
body {
  position: relative;
  display: flex;
  flex-direction: column;
  overflow: hidden;
  font: 6px/9px Roboto, "Open Sans", sans-serif;
  text-rendering: geometricPrecision;
  color: #39393b;
  background: #eeeeef;
}
button, select, input { font: inherit; color: inherit; background: none; border: 0; text-rendering: inherit; }
button { display: flex; align-items: center; justify-content: center; white-space: nowrap; }
button:disabled { color: #bcbcbe; }
h1, h2 { font: inherit; white-space: nowrap; }
i { display: block; }
svg { display: block; flex: none; fill: none; stroke: #555; stroke-width: 0.8; }
.sprite { position: absolute; width: 0; height: 0; }
.q, .k { width: 12px; height: 12px; }
.c { width: 4px; height: 4px; stroke: none; }
.m { width: 16px; height: 16px; }
.l { width: 16px; height: 10px; }
.s, .n { width: 10px; height: 10px; }
.g { width: 11px; height: 11px; }
.v { width: 9px; height: 9px; }
.b { width: 18px; height: 18px; }
.f { width: 16px; height: 14px; }
.w6 { width: 6px; height: 6px; }
.w8, .w8b { width: 8px; height: 8px; }
.w8b { stroke-width: 1; }

/* Title bar */
.titlebar { display: flex; align-items: center; height: 14px; background: #c9c9ca; }
.quick { display: flex; align-items: center; gap: 1px; }
.titlebar h1 { flex: 1; text-align: center; color: #4a4a4c; margin-bottom: 3px; }
.account { display: flex; align-items: center; gap: 4px; margin-right: 28px; }
.account button + .user { margin-left: -4px; }
.account .user { color: #555557; gap: 2px; }
.window { display: flex; align-items: center; padding-right: 2px; }

/* Ribbon tabs */
.tabs { display: flex; height: 11px; padding-left: 1px; background: #c9c9ca; }
.tabs button { padding: 0 5px; }
.tabs .file { width: 29px; background: #2279bd; color: #e8f3fc; margin-right: 1px; }
.tabs .active { width: 35px; background: #f2f2f3; }
.tabs .collapse { gap: 3px; margin-left: 6px; }
.collapse i { width: 8px; height: 5px; border: 1px solid #777; border-radius: 1px; background: #eee; }

/* Ribbon */
.ribbon { display: flex; height: 48px; padding-top: 1px; background: #eeeeef; border-bottom: 1px solid #dedee0; }
.panel { display: flex; flex-direction: column; border-right: 1px solid #e3e3e5; }
.panel h2 { display: flex; align-items: center; justify-content: center; gap: 3px; height: 8px; color: #4f4f51; }
.tools { flex: 1; display: flex; align-items: center; justify-content: center; }
.stack { display: flex; flex-direction: column; align-items: flex-start; justify-content: space-around; height: 38px; }
.stack button { gap: 2px; }
.on { background: #b4d5f3; outline: 1px solid #8fbbe4; }
.modify { flex-direction: column; gap: 3px; width: 28px; height: 35px; color: #3b5f84; }
.cur { width: 12px; height: 16px; }
.big { flex-direction: column; gap: 2px; line-height: 8px; text-align: center; }
.big .c { margin-top: -1px; }
.two { padding: 3px 0; }
.p-sel { width: 43px; }
.p-prop { width: 43px; }
.quad { display: grid; grid-template-columns: 18px 18px; grid-template-rows: 18px 18px; align-content: center; gap: 1px; }
.p-draw { width: 129px; }
.p-draw .tools { justify-content: space-between; padding: 0 2px; }
.p-draw .stack:first-child { width: 43px; }
.faces { width: 16px; padding: 2px 0; }
.gallery { display: grid; grid-template-columns: repeat(5, 11px) 6px; grid-auto-rows: 11px; background: #f5f5f6; outline: 1px solid #e0e0e2; }
.p-plane { width: 58px; }
.p-plane .tools { gap: 3px; }
.p-clip { width: 38px; }
.p-clip .tools { gap: 3px; }
.p-geo { width: 60px; }
.geo { display: grid; grid-template-columns: 36px 16px; grid-auto-rows: 12px; align-content: center; justify-items: start; gap: 0 3px; padding-left: 3px; }
.geo button { gap: 2px; }
.p-mod { width: 88px; }
.p-mod .tools { gap: 3px; }
.edit { display: grid; grid-template-columns: repeat(5, 13px); grid-auto-rows: 12px; }
.p-meas { width: 28px; }
.p-meas .stack { align-items: center; }
.p-inplace { width: 51px; border: 0; }
.p-inplace .tools { gap: 3px; }
.p-inplace h2 { background: #cbc6e2; }
.options { height: 14px; background: #f0f0f1; border-bottom: 1px solid #d6d6d8; border-left: 2px solid #f2f2dc; }

/* Work area */
main { flex: 1; display: flex; min-height: 0; background: #fff; }
aside { width: 160px; display: flex; flex-direction: column; border-right: 2px solid #d9d9db; }
.dock { display: flex; align-items: center; justify-content: space-between; gap: 2px; height: 10px; padding: 0 1px 0 2px; background: #eeeef0; }
.dock h2 { color: #4a4a4c; }
.type { display: flex; align-items: center; justify-content: space-between; height: 34px; padding: 0 1px 0 3px; background: linear-gradient(#f6f6f7, #e6e6e8); }
.bigr { width: 34px; height: 30px; stroke: none; }
.family { display: flex; height: 12px; background: #eeeef0; }
.combo { position: relative; flex: 1; }
.combo select { width: 100%; height: 100%; padding: 0 1px; appearance: none; background: #e3e3e4; border: 1px solid #cfcfd1; }
.combo svg { position: absolute; right: 1px; top: 3px; }
.family button { gap: 2px; width: 43px; }
.props { flex: 1; display: flex; flex-direction: column; }
.props table { width: 100%; border-collapse: collapse; table-layout: fixed; }
.props tr { height: 10px; }
.props td, .props th { text-align: left; font-weight: 400; line-height: 8px; border: 1px solid #dcdcde; }
.props td { padding-left: 4px; }
.props td + td { padding: 0; }
.props th { padding: 0 1px; background: #dededf; color: #222; }
.props th svg { float: right; margin-top: 1px; }
.props .dim { color: #868688; }
.props input { display: block; width: 100%; height: 9px; border: 1px solid #555; background: #fff; }
.props footer { display: flex; justify-content: space-between; align-items: center; height: 14px; margin-top: auto; padding: 0 1px 0 2px; background: #ececed; }
.props a { color: #3182c4; }
.props footer button { width: 34px; height: 11px; background: #cfcfd0; color: #9b9b9d; }
.browser { height: 165px; display: flex; flex-direction: column; }
.treebox { flex: 1; display: flex; min-height: 0; }
.tree { flex: 1; display: flex; flex-direction: column; list-style: none; margin-left: 5px; border-left: 1px solid #e4e4e4; color: #2d2d2f; }
.tree li { flex: 1; display: flex; align-items: center; gap: 6px; padding-left: 6px; min-height: 0; }
.tree .leaf { padding-left: 28px; }
.tree .leaf::before { content: ""; width: 7px; border-top: 1px dotted #ccc; margin: 0 -5px 0 -8px; }
.tree .current { font-weight: 700; color: #222; }
.vbar { display: flex; flex-direction: column; align-items: center; width: 8px; background: #f1f1f2; padding: 2px 0; }
.vbar i { width: 8px; height: 99px; background: #cdcdce; margin: 4px 0 auto; }
.hbar { height: 4px; background: #e9e9ea; }

.view { flex: 1; display: flex; flex-direction: column; min-width: 0; }
.doctabs { display: flex; align-items: center; height: 10px; background: #cbcbcc; }
.doctabs button { height: 10px; gap: 4px; padding: 0 3px; color: #6c6c6e; }
.doctabs .active { width: 64px; padding: 0 1px 0 2px; background: #fff; color: #222; }
.doctabs b { font-weight: 700; }
.doctabs .x { margin-left: auto; }
.doctabs .more { margin-left: auto; }
.stage { position: relative; flex: 1; display: flex; min-height: 0; }
.canvas { flex: 1; min-width: 0; height: 100%; }
.viewcube { position: absolute; right: 18px; top: 23px; width: 54px; height: 42px; }
.navbar { position: absolute; right: 9px; top: 69px; width: 14px; height: 47px; display: flex; flex-direction: column; align-items: center; justify-content: space-evenly; border: 1px solid #d2d2d4; border-radius: 3px; background: #f7f7f8; }
.stagebar { border-left: 1px solid #e0e0e0; }
.stagebar i { height: 8px; margin: auto 0; }
.viewbar { display: flex; align-items: center; gap: 1px; height: 10px; }
.scale { width: 36px; padding-left: 2px; }
.viewbar span { width: 6px; text-align: center; }
.hscroll { flex: 1; height: 8px; background: linear-gradient(90deg, #fff, #ececed 20%); }
.hscroll i { width: 8px; height: 8px; margin-left: 48%; background: #cdcdce; }

/* Status bar */
.status { display: flex; align-items: center; justify-content: space-between; height: 14px; padding: 2px 29px 0 1px; background: #c9c9ca; }
.filters { display: flex; gap: 2px; }

/* Institution marks over the bottom edge */
.brand { position: absolute; display: flex; align-items: center; color: #7d7d7f; opacity: 0.9; }
.upc { left: 16px; bottom: 7px; gap: 6px; font-family: Lato, sans-serif; font-size: 6px; line-height: 7px; font-weight: 900; }
.upc span { font-weight: 400; }
.seal { width: 30px; height: 30px; stroke: none; }
.seal text { font-size: 5px; font-weight: 700; }
.dept { margin-top: 3px; }
.etsab { right: 13px; bottom: 9px; gap: 5px; }
.etsab strong { font-family: Lato, sans-serif; font-size: 15px; line-height: 24px; font-weight: 400; }
.etsab b { font-weight: 700; }
.temple { width: 24px; height: 24px; stroke: none; }
.etsab p { font-family: "Open Sans", sans-serif; font-size: 8px; line-height: 8px; font-weight: 600; }
```
